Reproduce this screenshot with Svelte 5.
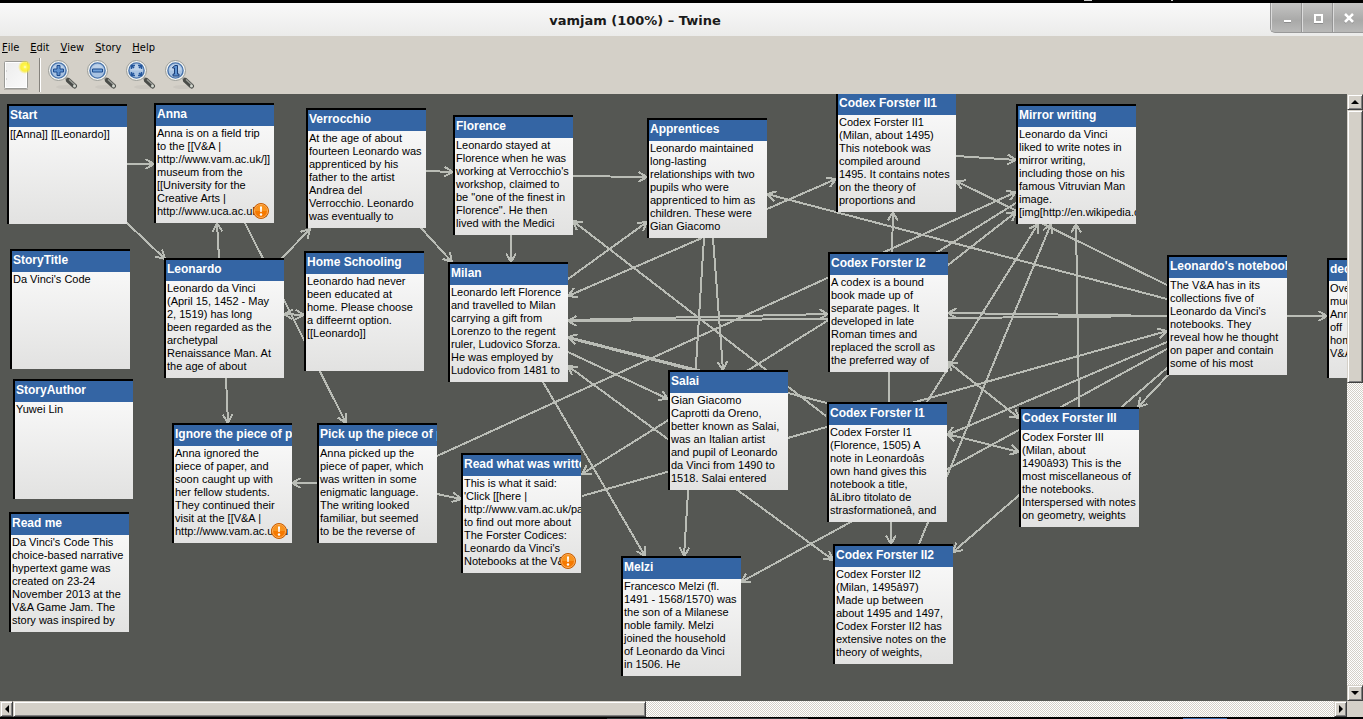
<script>
  const menus = ['File', 'Edit', 'View', 'Story', 'Help'];
  const tools = [
    { id: 'in', label: 'Zoom in' },
    { id: 'out', label: 'Zoom out' },
    { id: 'fit', label: 'Zoom to fit' },
    { id: 'one', label: 'Zoom to 100%' }
  ];

  const passages = [
    { x: 7, y: 10, title: 'Start', text: '[[Anna]] [[Leonardo]]' },
    { x: 154, y: 9, title: 'Anna', warn: true, text: 'Anna is on a field trip\nto the [[V&A |\nhttp://www.vam.ac.uk/]]\nmuseum from the\n[[University for the\nCreative Arts |\nhttp://www.uca.ac.uk/]]' },
    { x: 306, y: 14, title: 'Verrocchio', text: 'At the age of about\nfourteen Leonardo was\napprenticed by his\nfather to the artist\nAndrea del\nVerrocchio. Leonardo\nwas eventually to' },
    { x: 453, y: 21, title: 'Florence', text: 'Leonardo stayed at\nFlorence when he was\nworking at Verrocchio\'s\nworkshop, claimed to\nbe "one of the finest in\nFlorence". He then\nlived with the Medici' },
    { x: 647, y: 24, title: 'Apprentices', text: 'Leonardo maintained\nlong-lasting\nrelationships with two\npupils who were\napprenticed to him as\nchildren. These were\nGian Giacomo' },
    { x: 836, y: -2, title: 'Codex Forster II1', text: 'Codex Forster II1\n(Milan, about 1495)\nThis notebook was\ncompiled around\n1495. It contains notes\non the theory of\nproportions and' },
    { x: 1016, y: 10, title: 'Mirror writing', text: 'Leonardo da Vinci\nliked to write notes in\nmirror writing,\nincluding those on his\nfamous Vitruvian Man\nimage.\n[img[http://en.wikipedia.org' },
    { x: 10, y: 155, title: 'StoryTitle', text: "Da Vinci's Code" },
    { x: 164, y: 164, title: 'Leonardo', text: 'Leonardo da Vinci\n(April 15, 1452 - May\n2, 1519) has long\nbeen regarded as the\narchetypal\nRenaissance Man. At\nthe age of about' },
    { x: 304, y: 157, title: 'Home Schooling', text: 'Leonardo had never\nbeen educated at\nhome. Please choose\na diffeernt option.\n[[Leonardo]]' },
    { x: 448, y: 168, title: 'Milan', text: 'Leonardo left Florence\nand travelled to Milan\ncarrying a gift from\nLorenzo to the regent\nruler, Ludovico Sforza.\nHe was employed by\nLudovico from 1481 to' },
    { x: 828, y: 158, title: 'Codex Forster I2', text: 'A codex is a bound\nbook made up of\nseparate pages. It\ndeveloped in late\nRoman times and\nreplaced the scroll as\nthe preferred way of' },
    { x: 1167, y: 161, title: "Leonardo's notebooks", text: "The V&A has in its\ncollections five of\nLeonardo da Vinci's\nnotebooks. They\nreveal how he thought\non paper and contain\nsome of his most" },
    { x: 1327, y: 164, title: 'dec', text: 'Over\nmuch\nAnna\noff\nhome\nV&A' },
    { x: 13, y: 285, title: 'StoryAuthor', text: 'Yuwei Lin' },
    { x: 668, y: 276, title: 'Salai', text: 'Gian Giacomo\nCaprotti da Oreno,\nbetter known as Salai,\nwas an Italian artist\nand pupil of Leonardo\nda Vinci from 1490 to\n1518. Salai entered' },
    { x: 827, y: 308, title: 'Codex Forster I1', text: 'Codex Forster I1\n(Florence, 1505) A\nnote in Leonardoâs\nown hand gives this\nnotebook a title,\nâLibro titolato de\nstrasformationeâ, and' },
    { x: 1019, y: 313, title: 'Codex Forster III', text: 'Codex Forster III\n(Milan, about\n1490â93) This is the\nmost miscellaneous of\nthe notebooks.\nInterspersed with notes\non geometry, weights' },
    { x: 172, y: 329, title: 'Ignore the piece of paper', warn: true, text: 'Anna ignored the\npiece of paper, and\nsoon caught up with\nher fellow students.\nThey continued their\nvisit at the [[V&A |\nhttp://www.vam.ac.uk/u' },
    { x: 317, y: 329, title: 'Pick up the piece of paper', text: 'Anna picked up the\npiece of paper, which\nwas written in some\nenigmatic language.\nThe writing looked\nfamiliar, but seemed\nto be the reverse of' },
    { x: 461, y: 359, title: 'Read what was written', warn: true, text: "This is what it said:\n'Click [[here |\nhttp://www.vam.ac.uk/page\nto find out more about\nThe Forster Codices:\nLeonardo da Vinci's\nNotebooks at the V&A." },
    { x: 9, y: 418, title: 'Read me', text: 'Da Vinci\'s Code This\nchoice-based narrative\nhypertext game was\ncreated on 23-24\nNovember 2013 at the\nV&A Game Jam. The\nstory was inspired by' },
    { x: 621, y: 462, title: 'Melzi', text: 'Francesco Melzi (fl.\n1491 - 1568/1570) was\nthe son of a Milanese\nnoble family. Melzi\njoined the household\nof Leonardo da Vinci\nin 1506. He' },
    { x: 833, y: 450, title: 'Codex Forster II2', text: 'Codex Forster II2\n(Milan, 1495â97)\nMade up between\nabout 1495 and 1497,\nCodex Forster II2 has\nextensive notes on the\ntheory of weights,' }
  ];

  // x1, y1, x2, y2, and where the heads are: 1 = end, 2 = both ends, 0 = none
  const links = [
    [127, 70, 154, 70, 1],
    [127, 129, 165, 165, 1],
    [219, 164, 217, 129, 1],
    [245, 129, 346, 329, 1],
    [282, 164, 310, 135, 1],
    [284, 220, 304, 221, 2],
    [226, 284, 228, 329, 1],
    [426, 77, 453, 78, 1],
    [421, 134, 452, 168, 1],
    [573, 82, 647, 83, 1],
    [511, 141, 511, 168, 1],
    [568, 185, 647, 128, 1],
    [702, 144, 568, 202, 1],
    [826, 322, 573, 127, 1],
    [713, 144, 723, 276, 1],
    [704, 144, 684, 462, 1],
    [568, 226, 828, 220, 1],
    [828, 225, 568, 227, 1],
    [827, 309, 568, 243, 1],
    [692, 276, 568, 244, 0],
    [568, 258, 668, 305, 1],
    [568, 272, 833, 466, 2],
    [543, 288, 645, 462, 1],
    [437, 362, 1016, 98, 1],
    [1016, 109, 582, 380, 1],
    [948, 171, 1016, 118, 1],
    [767, 115, 836, 85, 1],
    [1167, 205, 767, 100, 1],
    [956, 62, 1016, 66, 1],
    [892, 158, 893, 118, 1],
    [1167, 191, 956, 87, 1],
    [927, 308, 1038, 130, 1],
    [919, 450, 1051, 130, 1],
    [1079, 313, 1076, 130, 1],
    [1167, 222, 948, 219, 1],
    [1167, 222, 948, 224, 0],
    [582, 402, 1167, 237, 1],
    [1167, 248, 947, 341, 1],
    [1167, 255, 741, 488, 1],
    [947, 340, 1019, 358, 2],
    [948, 268, 1019, 324, 2],
    [1170, 279, 1138, 313, 1],
    [1167, 274, 953, 458, 1],
    [889, 278, 891, 450, 1],
    [1287, 222, 1327, 222, 1],
    [317, 389, 292, 389, 1],
    [437, 400, 461, 405, 1]
  ];

  function head(x1, y1, x2, y2) {
    const a = Math.atan2(y2 - y1, x2 - x1);
    const p = (d) => `${(x2 - 10 * Math.cos(a + d)).toFixed(1)} ${(y2 - 10 * Math.sin(a + d)).toFixed(1)}`;
    return `M${p(0.52)}L${x2} ${y2}L${p(-0.52)}`;
  }

  function linkPath([x1, y1, x2, y2, heads]) {
    let d = `M${x1} ${y1}L${x2} ${y2}`;
    if (heads > 0) d += head(x1, y1, x2, y2);
    if (heads > 1) d += head(x2, y2, x1, y1);
    return d;
  }
</script>

<div class="window">
  <div class="desk-top"></div>

  <header class="titlebar">
    <h1>vamjam (100%) – Twine</h1>
    <div class="controls">
      <button aria-label="Minimize"><svg width="12" height="12"><path d="M3 9h7" stroke="#fff" stroke-width="2" /><path d="M3 10.500h7" stroke="#8c8c8c" /></svg></button>
      <button aria-label="Maximize"><svg width="12" height="12"><path d="M2 11.500h9" stroke="#8c8c8c" /><rect x="3" y="3" width="7" height="7" fill="none" stroke="#fff" stroke-width="2" /></svg></button>
      <button aria-label="Close"><svg width="12" height="12"><path d="M2 3l8 8M10 3l-8 8" stroke="#8c8c8c" stroke-width="2" /><path d="M2 2l8 8M10 2l-8 8" stroke="#fff" stroke-width="2.600" /></svg></button>
    </div>
  </header>

  <nav class="menubar">
    {#each menus as m}
      <button><u>{m[0]}</u>{m.slice(1)}</button>
    {/each}
  </nav>

  <div class="toolbar">
    <button aria-label="New passage" class="new">
      <svg width="30" height="32" viewBox="0 0 30 32">
        <defs>
          <radialGradient id="spark"><stop offset="0" stop-color="#fffde0" /><stop offset=".25" stop-color="#fff650" /><stop offset=".6" stop-color="#fcee20" stop-opacity=".85" /><stop offset="1" stop-color="#fce94f" stop-opacity="0" /></radialGradient>
          <linearGradient id="sheet" x2="1" y2="1"><stop offset="0" stop-color="#ececec" /><stop offset="1" stop-color="#fafafa" /></linearGradient>
        </defs>
        <path d="M4 30.500h24" stroke="#b5b1aa" />
        <rect x="4.500" y="2.500" width="23" height="27" rx="1" fill="url(#sheet)" stroke="#9a9a96" />
        <rect x="5.500" y="3.500" width="21" height="25" fill="none" stroke="#fff" />
        <path d="M6 12h1M6 20h1" stroke="#bbb" stroke-width="1" />
        <circle cx="25" cy="8" r="7" fill="url(#spark)" />
      </svg>
    </button>
    <span class="rule"></span>
    {#each tools as t}
      <button aria-label={t.label}>
        <svg width="30" height="30" viewBox="0 0 30 30">
          <ellipse cx="18" cy="27" rx="10" ry="2" fill="#000" opacity=".04" />
          <path d="M18 18l3 3" stroke="#888a85" stroke-width="3" />
          <path d="M20.500 20.500l6 5.500" stroke="#4a4c49" stroke-width="5" stroke-linecap="round" />
          <path d="M21 19.500l6 5.500" stroke="#9a9c97" stroke-width="1.500" />
          <circle cx="26.500" cy="26" r="1.500" fill="#d3d7cf" />
          <circle cx="10.500" cy="10.500" r="10" fill="#f4f5f3" stroke="#9a9c97" />
          <circle cx="10.500" cy="10.500" r="7.600" fill="#a9c3e2" stroke="#4873ab" stroke-width="1.400" />
          <path d="M4.500 10.500a6 6 0 0 1 12 0z" fill="#cddcee" opacity=".6" />
          {#if t.id === 'in'}
            <path d="M9 5.500h3v3.500h3.500v3h-3.500v3.500h-3v-3.500h-3.500v-3h3.500z" fill="#5d90cf" stroke="#1c4a8c" />
          {:else if t.id === 'out'}
            <path d="M5.500 9h10v3h-10z" fill="#6f9fd8" stroke="#1c4a8c" />
          {:else if t.id === 'fit'}
            <path d="M5.500 9v-3.500h3.500M12 5.500h3.500v3.500M15.500 12v3.500h-3.500M9 15.500h-3.500v-3.500M6 6l2 2M15 6l-2 2M15 15l-2-2M6 15l2-2" fill="none" stroke="#24569c" stroke-width="1.500" />
          {:else}
            <path d="M7.500 7.500l2.500-2h2.500v8.500h1.500v2h-6v-2h1.500v-6h-2z" fill="#5e93d2" stroke="#1c3f78" />
          {/if}
        </svg>
      </button>
    {/each}
  </div>

  <div class="view">
    <main class="canvas">
      <svg class="links" shape-rendering="crispEdges">
        {#each links as l}
          <path d={linkPath(l)} />
        {/each}
      </svg>
      {#each passages as p}
        <article style="left:{p.x}px;top:{p.y}px">
          <h2>{p.title}</h2>
          <p>{p.text}</p>
          {#if p.warn}
            <svg class="warn" width="16" height="16" viewBox="0 0 16 16">
              <circle cx="8" cy="8" r="7.500" fill="#f57900" stroke="#c65f04" />
              <circle cx="8" cy="8" r="6.500" fill="none" stroke="#fcaf5e" />
              <path d="M2 8a6 6 0 0 1 12 0z" fill="#fcaf3e" opacity=".5" />
              <path d="M7 3.500h2l-.300 5.500h-1.400z" fill="#fff" />
              <circle cx="8" cy="11.500" r="1.200" fill="#fff" />
            </svg>
          {/if}
        </article>
      {/each}
    </main>

    <div class="vbar">
      <button aria-label="Scroll up"><svg width="8" height="4"><path d="M4 0l4 4H0z" /></svg></button>
      <div class="vthumb"></div>
      <div class="space"></div>
      <button aria-label="Scroll down"><svg width="8" height="4"><path d="M4 4l4-4H0z" /></svg></button>
    </div>
    <div class="hbar">
      <button aria-label="Scroll left"><svg width="4" height="8"><path d="M0 4l4 4V0z" /></svg></button>
      <div class="hthumb"></div>
      <div class="space"></div>
      <button aria-label="Scroll right"><svg width="4" height="8"><path d="M4 4l-4 4V0z" /></svg></button>
    </div>
    <div class="corner"></div>
  </div>

  <div class="desk-bottom"></div>
</div>

<style>
  :global(body) {
    margin: 0;
    background: #000;
  }
  .window {
    display: flex;
    flex-direction: column;
    height: 100vh;
    overflow: hidden;
    background: #d4d0c8;
    font-family: 'Liberation Sans', Arial, sans-serif;
    color: #000;
  }
  button {
    display: flex;
    align-items: center;
    justify-content: center;
    margin: 0;
    padding: 0;
    border: 0;
    background: none;
    font: inherit;
    color: inherit;
  }
  .desk-top {
    flex: none;
    height: 3px;
    background:
      linear-gradient(#ccc, #ccc) 1084px 0 / 8px 1px no-repeat,
      linear-gradient(#ccc, #ccc) 1171px 0 / 2px 1px no-repeat,
      #000;
  }
  .desk-bottom {
    flex: none;
    height: 2px;
    background:
      linear-gradient(#3465a4, #3465a4) 1183px 1px / 44px 1px no-repeat,
      linear-gradient(#2e3436, #2e3436) 607px 1px / 201px 1px no-repeat,
      #000;
  }
  .titlebar {
    flex: none;
    display: flex;
    height: 33px;
    background: linear-gradient(#f9f9f9, #ebebea);
  }
  h1 {
    flex: 1;
    margin: 0;
    font: bold 13px/35px 'DejaVu Sans', sans-serif;
    color: #1a1a1a;
    text-align: center;
  }
  .controls {
    flex: none;
    display: flex;
    height: 29px;
    border: 1px solid #999;
    border-width: 0 0 1px 1px;
    border-radius: 0 0 0 5px;
    overflow: hidden;
    background: linear-gradient(#c4c4c3, #a9a9a8 60%, #b9b9b8);
  }
  .controls button {
    width: 30px;
    border-left: 1px solid #dcdcdc;
    box-sizing: content-box;
  }
  .controls button + button {
    box-shadow: -1px 0 #959595;
  }
  .controls button:last-child {
    width: 29px;
  }
  .menubar {
    flex: none;
    display: flex;
    gap: 11px;
    padding: 4px 2px 0;
    font: 11px/15px 'DejaVu Sans Condensed', 'DejaVu Sans', sans-serif;
  }
  .toolbar {
    flex: none;
    display: flex;
    align-items: center;
    gap: 9px;
    height: 39px;
  }
  .toolbar .rule {
    width: 1px;
    height: 34px;
    border-left: 1px solid #85827c;
    background: #fff;
    margin-right: -2px;
  }
  .view {
    flex: 1;
    min-height: 0;
    display: grid;
    grid-template: minmax(0, 1fr) 16px / minmax(0, 1fr) 16px;
  }
  .canvas {
    position: relative;
    overflow: hidden;
    background: #555753;
  }
  .links {
    position: absolute;
    inset: 0;
    width: 100%;
    height: 100%;
  }
  .links path {
    fill: none;
    stroke: #babdb6;
    stroke-width: 2;
  }
  article {
    position: absolute;
    box-sizing: border-box;
    width: 120px;
    height: 120px;
    overflow: hidden;
    border: solid #000;
    border-width: 2px 0 0 2px;
    background: linear-gradient(#fcfcfc, #e2e2e1);
  }
  h2 {
    margin: 0;
    padding-left: 1px;
    height: 21px;
    overflow: hidden;
    background: #3465a4;
    color: #fff;
    font-size: 12px;
    line-height: 19px;
    white-space: nowrap;
  }
  p {
    margin: 0;
    padding: 1px 0 0 1px;
    font-size: 11px;
    line-height: 13px;
    white-space: pre;
  }
  .warn {
    position: absolute;
    right: 5px;
    bottom: 4px;
  }
  .vbar,
  .hbar {
    display: flex;
    background: repeating-conic-gradient(#d4d0c8 0 25%, #fff 0 50%) 0 0 / 2px 2px;
  }
  .vbar {
    flex-direction: column;
  }
  .vbar button,
  .hbar button,
  .vthumb,
  .hthumb {
    flex: none;
    box-sizing: border-box;
    border: 1px solid #d4d0c8;
    border-right-color: #404040;
    border-bottom-color: #404040;
    box-shadow: inset 1px 1px #fff, inset -1px -1px #808080;
    background: #d4d0c8;
  }
  .vbar button {
    height: 16px;
  }
  .hbar button {
    width: 13px;
  }
  .vthumb {
    height: 45%;
  }
  .hthumb {
    width: 47%;
  }
  .space {
    flex: 1;
  }
  .corner {
    background: #d4d0c8;
  }
</style>
